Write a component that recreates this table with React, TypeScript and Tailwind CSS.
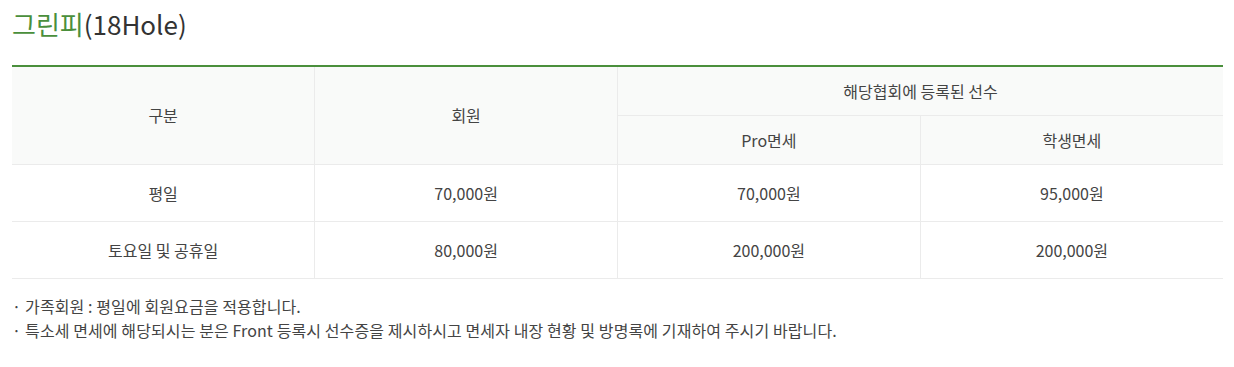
import React from 'react';

const rows = [
  { label: '평일', member: '70,000원', pro: '70,000원', student: '95,000원' },
  { label: '토요일 및 공휴일', member: '80,000원', pro: '200,000원', student: '200,000원' },
];

const notes = [
  '가족회원 : 평일에 회원요금을 적용합니다.',
  '특소세 면세에 해당되시는 분은 Front 등록시 선수증을 제시하시고 면세자 내장 현황 및 방명록에 기재하여 주시기 바랍니다.',
];

const cell = 'border border-[#ebebeb] text-center text-[16px] text-[#444] font-normal';

export default function App() {
  return (
    <div className="bg-white px-3 pt-[4px] font-['Noto_Sans_CJK_KR','Noto_Sans',sans-serif]">
      <h2 className="text-[26px] leading-[40px] text-[#333] font-normal">
        <span className="text-[#4a8f3c]">그린피</span>(18Hole)
      </h2>

      <table className="mt-[21px] w-[1211px] table-fixed border-collapse border-t-2 border-t-[#4a8f3c]">
        <thead>
          <tr className="bg-[#f9faf9]">
            <th rowSpan={2} className={`${cell} border-l-0 border-t-0`}>구분</th>
            <th rowSpan={2} className={`${cell} border-t-0`}>회원</th>
            <th colSpan={2} className={`${cell} h-[49px] border-r-0 border-t-0`}>해당협회에 등록된 선수</th>
          </tr>
          <tr className="bg-[#f9faf9]">
            <th className={`${cell} h-[49px]`}>Pro면세</th>
            <th className={`${cell} h-[49px] border-r-0`}>학생면세</th>
          </tr>
        </thead>
        <tbody>
          {rows.map((r) => (
            <tr key={r.label}>
              <td className={`${cell} h-[57px] border-l-0`}>{r.label}</td>
              <td className={cell}>{r.member}</td>
              <td className={cell}>{r.pro}</td>
              <td className={`${cell} border-r-0`}>{r.student}</td>
            </tr>
          ))}
        </tbody>
      </table>

      <ul className="mt-[15px] text-[16px] leading-[24px] text-[#444] tracking-[0.1px]">
        {notes.map((n) => (
          <li key={n} className="flex gap-[4px]">
            <span>·</span>
            <span>{n}</span>
          </li>
        ))}
      </ul>
    </div>
  );
}
